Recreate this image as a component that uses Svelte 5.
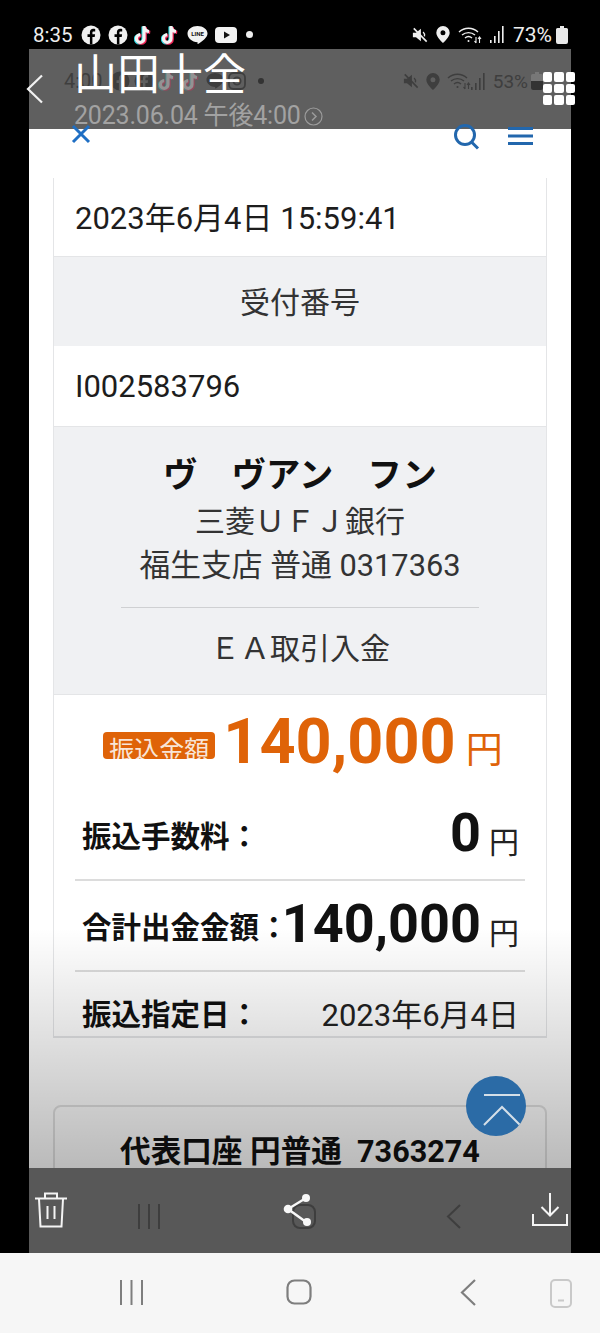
<script>
  const rows = [
    { label: "振込手数料：", value: "0", unit: "円", big: true },
    { label: "合計出金金額：", value: "140,000", unit: "円", big: true },
    { label: "振込指定日：", value: "2023年6月4日", unit: "", big: false }
  ];
</script>

{#snippet fbIcon()}
  <svg width="20" height="20" viewBox="0 0 20 20">
    <circle cx="10" cy="10" r="9.500" fill="currentColor" />
    <path d="M11.400 19.500v-7.500h2.300l.4-2.700h-2.700V7.700c0-.8.3-1.300 1.400-1.300h1.400V4c-.5-.1-1.200-.2-2-.2-2 0-3.300 1.200-3.300 3.400v2.100H6.500V12h2.400v7.500z" fill="var(--cut)" />
  </svg>
{/snippet}

{#snippet tiktokIcon()}
  <svg width="20" height="22" viewBox="0 0 20 22" fill="none" stroke-width="3.200">
    <path d="M10 2v12.500a3.800 3.800 0 1 1-3.800-3.800M10 2.500c.3 2.700 2.300 4.700 5 5" stroke="#25d9e2" transform="translate(-1 .6)" />
    <path d="M10 2v12.500a3.800 3.800 0 1 1-3.800-3.800M10 2.500c.3 2.700 2.300 4.700 5 5" stroke="#f5285a" transform="translate(1.200 .9)" />
    <path d="M10 2v12.500a3.800 3.800 0 1 1-3.800-3.800M10 2.500c.3 2.700 2.300 4.700 5 5" stroke="#f4f4f4" />
  </svg>
{/snippet}

{#snippet muteIcon()}
  <svg width="16" height="16" viewBox="0 0 18 18">
    <path d="M1 6.500h3.500L10 2v14l-5.500-4.500H1z" fill="currentColor" />
    <path d="M2 1.500 16.500 16.500" stroke="currentColor" stroke-width="1.800" />
    <path d="M12.500 5.500a5 5 0 0 1 1.500 5" stroke="currentColor" stroke-width="1.500" fill="none" />
  </svg>
{/snippet}

{#snippet pinIcon()}
  <svg width="14" height="17" viewBox="0 0 14 17">
    <path fill-rule="evenodd" d="M7 0a6.700 6.700 0 0 1 6.700 6.700C13.700 11 7 17 7 17S.3 11 .3 6.700A6.700 6.700 0 0 1 7 0zm0 4.300a2.500 2.500 0 1 0 0 5 2.500 2.500 0 0 0 0-5z" fill="currentColor" />
  </svg>
{/snippet}

{#snippet wifiIcon()}
  <svg width="24" height="18" viewBox="0 0 24 18" fill="none" stroke="currentColor" stroke-width="1.400">
    <path d="M1 6a14 14 0 0 1 19 0M4 9a10 10 0 0 1 13 0M7 12a5.500 5.500 0 0 1 7 0" />
    <circle cx="10.500" cy="15" r="1" fill="currentColor" stroke="none" />
    <path d="M18 11v6M16.500 15l1.500 2M21.500 17v-6M20 13l1.500-2 1.500 2" stroke-width="1.100" />
  </svg>
{/snippet}

{#snippet signalIcon()}
  <svg width="15" height="17" viewBox="0 0 15 17" fill="currentColor">
    <rect x="0" y="14" width="1.600" height="3" />
    <rect x="4" y="10" width="1.600" height="7" />
    <rect x="8" y="5" width="1.600" height="12" />
    <rect x="12" y="0" width="1.600" height="17" />
  </svg>
{/snippet}

<div class="screen">
  <div class="statusbar">
    <div class="status-left">
      <span class="clock">8:35</span>
      <span class="cut-dark">{@render fbIcon()}</span>
      <span class="cut-dark">{@render fbIcon()}</span>
      {@render tiktokIcon()}
      {@render tiktokIcon()}
      <svg width="21" height="20" viewBox="0 0 21 20">
        <path d="M10.500 1C16 1 20.500 4.400 20.500 8.500c0 4-5 7.800-9.500 10.500-.6.300-.5-1-.4-1.800C5 17 .5 13.200.5 8.500.5 4.400 5 1 10.500 1z" fill="#f2f2f2" />
        <text x="10.500" y="10.800" class="line-text">LINE</text>
      </svg>
      <svg width="22" height="16" viewBox="0 0 22 16">
        <rect x="0" y="0" width="22" height="16" rx="4" fill="#f2f2f2" />
        <path d="M9 4.500 15 8l-6 3.500z" fill="#111" />
      </svg>
      <span class="dot"></span>
    </div>
    <div class="status-right">
      {@render muteIcon()}
      {@render pinIcon()}
      {@render wifiIcon()}
      {@render signalIcon()}
      <span class="percent">73%</span>
      <svg width="12" height="18" viewBox="0 0 12 18">
        <path d="M4 0h4v2h2.500A1.500 1.500 0 0 1 12 3.500V16a2 2 0 0 1-2 2H2a2 2 0 0 1-2-2V3.500A1.500 1.500 0 0 1 1.500 2H4z" fill="#e8e8e8" />
      </svg>
    </div>
  </div>

  <div class="column">
    <header class="viewer-head">
      <div class="ghost-status">
        <div class="ghost-left">
          <span class="ghost-clock">4:00</span>
          <span class="cut-gray">{@render fbIcon()}</span>
          <span class="cut-gray">{@render fbIcon()}</span>
          <span class="ghost-tt">{@render tiktokIcon()}</span>
          <span class="ghost-tt">{@render tiktokIcon()}</span>
          <svg width="18" height="18" viewBox="0 0 18 18">
            <path d="M9 1c4.700 0 8.500 3 8.500 6.800 0 3.400-4.200 6.600-8 8.800-.5.300-.4-.8-.3-1.500C4.700 15 .5 11.700.5 7.800.5 4 4.300 1 9 1z" fill="#3e3e3e" />
          </svg>
          <svg width="18" height="18" viewBox="0 0 18 18" fill="none" stroke="#3e3e3e" stroke-width="1.800">
            <rect x="1" y="1" width="16" height="16" rx="4.500" />
            <circle cx="9" cy="9" r="3.600" />
          </svg>
          <span class="ghost-dot"></span>
        </div>
        <div class="ghost-right">
          {@render muteIcon()}
          {@render pinIcon()}
          {@render wifiIcon()}
          <span class="ghost-signal">{@render signalIcon()}</span>
          <span class="ghost-percent">53%</span>
          <svg width="12" height="18" viewBox="0 0 12 18">
            <path d="M4 0h4v2h2.500A1.500 1.500 0 0 1 12 3.500V16a2 2 0 0 1-2 2H2a2 2 0 0 1-2-2V3.500A1.500 1.500 0 0 1 1.500 2H4z" fill="#777" />
            <path d="M0 9h12v7a2 2 0 0 1-2 2H2a2 2 0 0 1-2-2z" fill="#333" />
          </svg>
        </div>
      </div>

      <svg class="back" width="18" height="30" viewBox="0 0 18 30" fill="none" stroke="#f2f2f2" stroke-width="2.200">
        <path d="M16 1.500 2 15l14 13.500" />
      </svg>
      <div class="title-block">
        <div class="title">山田十全</div>
        <div class="date">2023.06.04 午後4:00
          <svg width="19" height="19" viewBox="0 0 19 19" fill="none" stroke="#9c9c9c" stroke-width="1.200">
            <circle cx="9.500" cy="9.500" r="8.500" />
            <path d="M8 5.500 12 9.500l-4 4" stroke-width="1.500" />
          </svg>
        </div>
      </div>
      <div class="apps">
        {#each Array(9) as _}
          <span></span>
        {/each}
      </div>

      <div class="site-icons">
        <svg width="20" height="20" viewBox="0 0 20 20" stroke="#1f6fc4" stroke-width="3" fill="none">
          <path d="M2 2l16 16M18 2 2 18" />
        </svg>
        <div class="site-right">
          <svg width="27" height="27" viewBox="0 0 27 27" fill="none" stroke="#2267ad" stroke-width="3">
            <circle cx="12" cy="12" r="9.500" />
            <path d="M18.500 19 25 25.500" />
          </svg>
          <svg width="25" height="18" viewBox="0 0 25 18" fill="#2267ad">
            <rect width="25" height="3" />
            <rect y="7.500" width="25" height="3" />
            <rect y="15" width="25" height="3" />
          </svg>
        </div>
      </div>
    </header>

    <main class="page">
      <section class="card">
        <div class="row-value">2023年6月4日 15:59:41</div>
        <div class="row-head">受付番号</div>
        <div class="row-value tall">I002583796</div>
        <div class="payee">
          <div class="payee-name">ヴ　ヴアン　フン</div>
          <div class="payee-line">三菱ＵＦＪ銀行</div>
          <div class="payee-line branch">福生支店 普通 0317363</div>
          <div class="payee-note">ＥＡ取引入金</div>
        </div>
        <div class="amounts">
          <div class="transfer">
            <span class="badge">振込金額</span>
            <span class="transfer-num">140,000</span>
            <span class="transfer-unit">円</span>
          </div>
          {#each rows as row}
            <div class="line">
              <span class="line-label">{row.label}</span>
              <span class="line-value">
                <span class:num={row.big} class:plain={!row.big}>{row.value}</span>
                {#if row.unit}<span class="unit">{row.unit}</span>{/if}
              </span>
            </div>
          {/each}
        </div>
      </section>

      <section class="account">代表口座 円普通&nbsp;&nbsp;7363274</section>

      <div class="fade"></div>
      <div class="to-top">
        <svg width="38" height="32" viewBox="0 0 38 32" fill="none" stroke="#d4dfe8" stroke-width="2">
          <path d="M1 1h36M1 31 19 13l18 18" />
        </svg>
      </div>
    </main>

    <footer class="viewer-foot">
      <div class="ghost-nav">
        <svg width="24" height="25" viewBox="0 0 24 25" stroke="#3e3e3e" stroke-width="2"><path d="M2 0v25M12 0v25M22 0v25" /></svg>
        <svg width="24" height="25" viewBox="0 0 24 25" fill="none" stroke="#3e3e3e" stroke-width="2"><rect x="1" y="1" width="22" height="23" rx="7" /></svg>
        <svg width="15" height="25" viewBox="0 0 15 25" fill="none" stroke="#3e3e3e" stroke-width="2"><path d="M14 1 2 12.500 14 24" /></svg>
      </div>
      <svg class="foot-icon" width="34" height="36" viewBox="0 0 34 36" fill="none" stroke="#f4f4f4" stroke-width="2">
        <path d="M1 6.500h32M11 6V1.500h12V6M5 7l1.500 27.500h21L29 7M13.500 14v13M20.500 14v13" />
      </svg>
      <svg class="foot-icon foot-share" width="30" height="34" viewBox="0 0 30 34">
        <path d="M24 5 6 16l18 13" fill="none" stroke="#f8f8f8" stroke-width="2.400" />
        <circle cx="24" cy="5" r="4" fill="#f8f8f8" />
        <circle cx="6" cy="16" r="4.300" fill="#f8f8f8" />
        <circle cx="25" cy="29" r="4" fill="#f8f8f8" />
      </svg>
      <svg class="foot-icon" width="36" height="33" viewBox="0 0 36 33" fill="none" stroke="#f4f4f4" stroke-width="2">
        <path d="M1 21v11h34V21M18 0v22M9.500 14 18 22.500 26.500 14" />
      </svg>
    </footer>
  </div>

  <nav class="navbar">
    <svg width="25" height="25" viewBox="0 0 25 25" stroke="#7e7e7e" stroke-width="2"><path d="M2 0v25M12.500 0v25M23 0v25" /></svg>
    <svg width="26" height="26" viewBox="0 0 26 26" fill="none" stroke="#7e7e7e" stroke-width="2.200"><rect x="1.500" y="1.500" width="23" height="23" rx="7" /></svg>
    <svg class="nav-back" width="16" height="27" viewBox="0 0 16 27" fill="none" stroke="#7e7e7e" stroke-width="2.200"><path d="M15 1 2 13.500 15 26" /></svg>
    <svg class="nav-phone" width="22" height="29" viewBox="0 0 22 29" fill="none" stroke="#c9c9c9" stroke-width="2"><rect x="1" y="1" width="20" height="27" rx="4" /><path d="M8 21.500h6" /></svg>
  </nav>
</div>

<style>
  :global(body) {
    background: #000;
  }

  .screen {
    width: 600px;
    height: 1333px;
    display: flex;
    flex-direction: column;
    background: #000;
    color: #111;
    font-family: Roboto, "Noto Sans CJK JP", sans-serif;
    overflow: hidden;
  }

  .statusbar {
    height: 49px;
    flex: none;
    display: flex;
    justify-content: space-between;
    align-items: center;
    padding: 20px 32px 0 33px;
    box-sizing: border-box;
    color: #eee;
  }

  .status-left,
  .status-right {
    display: flex;
    align-items: center;
  }

  .status-left {
    gap: 6.500px;
  }

  .status-right {
    gap: 8px;
  }

  .clock {
    font-size: 20.500px;
    margin-right: 2px;
  }

  .percent {
    font-size: 21px;
    margin-right: -4px;
  }

  .cut-dark {
    --cut: #000;
    display: flex;
    color: #f0f0f0;
  }

  .cut-gray {
    --cut: #5f5f5f;
    display: flex;
    color: #3e3e3e;
  }

  .ghost-tt {
    display: flex;
    opacity: 0.35;
  }

  .line-text {
    font-family: Roboto, sans-serif;
    font-size: 6px;
    font-weight: 700;
    text-anchor: middle;
    fill: #111;
  }

  .dot {
    width: 7px;
    height: 7px;
    margin-left: 3px;
    border-radius: 50%;
    background: #eee;
  }

  .column {
    flex: 1;
    margin: 0 29px;
    display: flex;
    flex-direction: column;
    min-height: 0;
  }

  .viewer-head {
    position: relative;
    flex: none;
    height: 80px;
    background: #5f5f5f;
    display: flex;
    z-index: 2;
  }

  .ghost-status {
    position: absolute;
    top: 20px;
    left: 35px;
    right: 28px;
    display: flex;
    justify-content: space-between;
    align-items: center;
    color: #3e3e3e;
  }

  .ghost-left,
  .ghost-right {
    display: flex;
    align-items: center;
    gap: 4px;
  }

  .ghost-right {
    gap: 7px;
  }

  .ghost-signal {
    display: flex;
    margin-left: -7px;
  }

  .ghost-clock {
    font-size: 20px;
    margin-right: 3px;
  }

  .ghost-percent {
    font-size: 19px;
    margin-right: -4px;
  }

  .ghost-dot {
    width: 6px;
    height: 6px;
    margin-left: 8px;
    border-radius: 50%;
    background: #333;
  }

  .back {
    position: absolute;
    left: -3px;
    top: 25px;
  }

  .title-block {
    position: relative;
    margin-left: 45px;
    padding-top: 1px;
    flex: 1;
  }

  .title {
    color: #fff;
    font-size: 43px;
    line-height: 50px;
    font-weight: 400;
  }

  .date {
    color: #a2a2a2;
    font-size: 25px;
    line-height: 30px;
    letter-spacing: -0.2px;
    display: flex;
    align-items: center;
    gap: 3px;
    margin-top: 1px;
  }

  .apps {
    position: absolute;
    right: -4px;
    top: 23px;
    display: grid;
    grid-template-columns: repeat(3, 9.500px);
    grid-auto-rows: 9.500px;
    gap: 2px;
  }

  .apps span {
    background: #fff;
    border-radius: 2px;
  }

  .site-icons {
    position: absolute;
    left: 42px;
    right: 38px;
    top: 75px;
    display: flex;
    justify-content: space-between;
    align-items: flex-start;
  }

  .site-right {
    display: flex;
    align-items: flex-start;
    gap: 28px;
    margin-top: -1px;
  }

  .site-right svg:last-child {
    margin-top: 4px;
  }

  .page {
    position: relative;
    flex: none;
    height: 1039px;
    overflow: hidden;
    background: #fff;
    padding: 49px 24px 0;
    box-sizing: border-box;
  }

  .card {
    border: 1px solid #e4e5e7;
    border-top: 0;
    border-bottom-width: 2px;
  }

  .row-value {
    height: 74px;
    padding: 0 0 4px 21px;
    display: flex;
    align-items: center;
    font-size: 31px;
    color: #1d1d1d;
    border-bottom: 1px solid #e4e5e7;
  }

  .row-value.tall {
    height: 80px;
    padding-bottom: 0;
  }

  .row-head {
    height: 85px;
    padding-bottom: 4px;
    display: flex;
    align-items: center;
    justify-content: center;
    font-size: 30px;
    color: #333;
    background: #f0f1f3;
  }

  .payee {
    background: #f0f1f3;
    border-bottom: 1px solid #e4e5e7;
    text-align: center;
    padding-top: 24px;
    height: 243px;
  }

  .payee-name {
    font-size: 34.300px;
    font-weight: 700;
    line-height: 49px;
    color: #111;
  }

  .payee-line {
    font-size: 30px;
    line-height: 44px;
    color: #333;
  }

  .payee-line.branch {
    font-size: 30.800px;
    line-height: 43px;
  }

  .payee-note {
    margin: 20px 67px 0;
    padding-top: 19px;
    border-top: 1px solid #cfd0d2;
    font-size: 30px;
    line-height: 44px;
    color: #333;
  }

  .amounts {
    height: 341px;
    padding: 0 21px;
  }

  .transfer {
    display: flex;
    align-items: center;
    justify-content: center;
    gap: 8px;
    height: 93px;
    padding: 0 0 2px 6px;
  }

  .badge {
    background: #df6308;
    color: #f8e6d8;
    font-size: 25px;
    line-height: 38px;
    height: 27px;
    padding: 0 6px;
    border-radius: 4px;
    overflow: hidden;
    margin-top: 7px;
    white-space: nowrap;
  }

  .transfer-num {
    color: #df6308;
    font-size: 63px;
    font-weight: 700;
    line-height: 70px;
  }

  .transfer-unit {
    color: #df6308;
    font-size: 37px;
    margin-top: 10px;
    margin-left: 2px;
  }

  .line {
    height: 89px;
    display: flex;
    align-items: center;
    justify-content: space-between;
    padding: 0 6px 0 8px;
    border-bottom: 2px solid #dcdcdc;
  }

  .line:last-child {
    border-bottom: 0;
    height: 81px;
  }

  .line-label {
    font-size: 29.500px;
    font-weight: 700;
    color: #111;
    white-space: nowrap;
    margin: -2px -8px 0 -1px;
  }

  .line-value {
    display: flex;
    align-items: center;
    gap: 8px;
  }

  .num {
    font-size: 54px;
    font-weight: 700;
    line-height: 60px;
    margin-top: -3px;
  }

  .plain {
    font-size: 31px;
    color: #222;
  }

  .unit {
    font-size: 30px;
    margin-top: 10px;
    color: #222;
  }

  .account {
    margin-top: 67px;
    height: 100px;
    border: 2px solid #e2e2e2;
    border-radius: 8px;
    text-align: center;
    font-size: 30.600px;
    font-weight: 700;
    line-height: 90px;
    white-space: nowrap;
  }

  .fade {
    position: absolute;
    left: 0;
    right: 0;
    bottom: 0;
    height: 240px;
    background: linear-gradient(rgba(0, 0, 0, 0), rgba(0, 0, 0, 0.27));
    pointer-events: none;
  }

  .to-top {
    position: absolute;
    right: 45px;
    top: 947px;
    width: 60px;
    height: 60px;
    border-radius: 50%;
    background: #2b6ba6;
    overflow: hidden;
    display: flex;
    align-items: flex-start;
    justify-content: flex-start;
  }

  .to-top svg {
    flex: none;
    margin: 18px 0 0 17px;
  }

  .viewer-foot {
    position: relative;
    flex: none;
    height: 85px;
    background: #585858;
    display: flex;
    justify-content: space-between;
    align-items: center;
    padding: 0 3px 2px 5px;
    box-sizing: border-box;
    z-index: 1;
  }

  .foot-icon {
    position: relative;
  }

  .foot-share {
    margin-left: -6px;
  }

  .ghost-nav {
    position: absolute;
    top: 36px;
    left: 108px;
    right: 110px;
    display: flex;
    justify-content: space-between;
  }

  .navbar {
    flex: none;
    height: 80px;
    box-sizing: border-box;
    position: relative;
    background: #f6f6f6;
    display: flex;
    align-items: center;
    gap: 142px;
    padding: 0 0 2px 119px;
  }

  .nav-back {
    margin-left: 6px;
  }

  .nav-phone {
    position: absolute;
    left: 550px;
    top: 26px;
  }
</style>
